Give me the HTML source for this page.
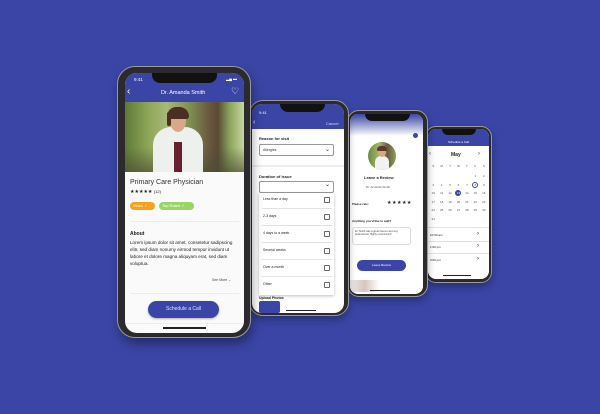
<!DOCTYPE html>
<html><head><meta charset="utf-8"><style>
*{margin:0;padding:0;box-sizing:border-box}
body{width:600px;height:414px;background:#3a45a5;position:relative;overflow:hidden;font-family:"Liberation Sans",sans-serif;color:#222}
.a{position:absolute}
.frame{position:absolute;background:#2b2b2e;border:1.5px solid #9a9a9e;box-shadow:0 4px 8px rgba(0,0,0,.3)}
.scr{position:absolute;background:#fff;overflow:hidden}
.notch{position:absolute;background:#111;border-radius:0 0 8px 8px}
.t{position:absolute;white-space:nowrap}
.hr{position:absolute;height:1px;background:#e2e2e2}
.cb{position:absolute;width:6px;height:6px;border:1px solid #666;border-radius:1px}
.cal{position:absolute;left:1px;width:59px;display:grid;grid-template-columns:repeat(7,1fr);font-size:3px;color:#555;text-align:center;row-gap:0}
.cal span{height:8.6px;line-height:8.6px}
</style></head><body>

<!-- phone 4 -->
<div class="frame" style="left:425px;top:126px;width:67px;height:157px;border-radius:11px"></div>
<div class="scr" style="left:428px;top:129px;width:61px;height:150px;border-radius:8px">
 <div class="a" style="left:0;top:0;width:61px;height:17px;background:#3a45a5"></div>
 <div class="notch" style="left:14px;top:0;width:34px;height:6px"></div>
 <div class="t" style="left:20px;top:11px;font-size:3px;color:#fff">Schedule a Call</div>
 <div class="t" style="left:23px;top:23px;font-size:5px;font-weight:bold">May</div>
 <div class="t" style="left:1px;top:22px;font-size:6px;color:#444">‹</div>
 <div class="t" style="left:50px;top:22px;font-size:6px;color:#444">›</div>
 <div class="cal" style="top:33px"><span>S</span><span>M</span><span>T</span><span>W</span><span>T</span><span>F</span><span>S</span></div>
 <div class="cal" style="top:43px">
  <span></span><span></span><span></span><span></span><span></span><span>1</span><span>2</span>
  <span>3</span><span>4</span><span>5</span><span>6</span><span>7</span><span style="border:.6px solid #3a45a5;border-radius:50%;width:6px;height:6px;line-height:5px;margin:1px auto 0">8</span><span>9</span>
  <span>10</span><span>11</span><span>12</span><span style="background:#3a45a5;color:#fff;border-radius:50%;width:6px;height:6px;line-height:6px;margin:1px auto 0">13</span><span>14</span><span>15</span><span>16</span>
  <span>17</span><span>18</span><span>19</span><span>20</span><span>21</span><span>22</span><span>23</span>
  <span>24</span><span>25</span><span>26</span><span>27</span><span>28</span><span>29</span><span>30</span>
  <span>31</span>
 </div>
 <div class="hr" style="left:0;top:98px;width:61px"></div>
 <div class="t" style="left:2px;top:104px;font-size:3px">10:00 am</div><div class="t" style="left:49px;top:102px;font-size:6px">›</div>
 <div class="hr" style="left:0;top:112px;width:61px"></div>
 <div class="t" style="left:2px;top:116px;font-size:3px">1:00 pm</div><div class="t" style="left:49px;top:114px;font-size:6px">›</div>
 <div class="hr" style="left:0;top:124px;width:61px"></div>
 <div class="t" style="left:2px;top:129px;font-size:3px">3:00 pm</div><div class="t" style="left:49px;top:127px;font-size:6px">›</div>
 <div class="a" style="left:15px;top:146px;width:28px;height:1px;background:#222"></div>
</div>

<!-- phone 3 -->
<div class="frame" style="left:347px;top:110px;width:81px;height:187px;border-radius:12px"></div>
<div class="scr" style="left:350px;top:114px;width:73px;height:180px;border-radius:8px">
 <div class="a" style="left:0;top:0;width:73px;height:22px;background:linear-gradient(#3a45a5,#fff)"></div>
 <div class="notch" style="left:15px;top:0;width:45px;height:7px"></div>
 <div class="a" style="left:63px;top:19px;width:5px;height:5px;border-radius:50%;background:#3a45a5"></div>
 <div class="a" style="left:18px;top:28px;width:28px;height:28px;border-radius:50%;overflow:hidden;background:linear-gradient(90deg,#6d8a44,#a3b86a 40%,#6b5a40 70%,#8aa35a)">
  <div class="a" style="left:7px;top:14px;width:14px;height:16px;border-radius:6px 6px 0 0;background:#f2f2f2"></div>
  <div class="a" style="left:10px;top:5px;width:8px;height:10px;border-radius:50%;background:#d9a88a"></div>
  <div class="a" style="left:9px;top:4px;width:10px;height:5px;border-radius:5px 5px 2px 2px;background:#5a3a28"></div>
 </div>
 <div class="t" style="left:14px;top:61px;font-size:4px;font-weight:bold">Leave a Review</div>
 <div class="t" style="left:16px;top:71px;font-size:3px;color:#555">Dr. Amanda Smith</div>
 <div class="t" style="left:2px;top:88px;font-size:3px;font-weight:bold">Please rate:</div>
 <div class="t" style="left:37px;top:86px;font-size:5px;letter-spacing:.5px">★★★★★</div>
 <div class="t" style="left:2px;top:105px;font-size:3px;font-weight:bold">Anything you'd like to add?</div>
 <div class="a" style="left:2px;top:113px;width:59px;height:18px;border:1px solid #ddd;border-radius:3px;font-size:2.5px;padding:2px;color:#444">Dr. Smith was a great listener and very professional. Highly recommend!</div>
 <div class="a" style="left:7px;top:146px;width:49px;height:11px;border-radius:6px;background:#3a45a5;color:#fff;font-size:3px;text-align:center;line-height:11px">Leave Review</div>
 <div class="a" style="left:0;top:166px;width:73px;height:12px;background:linear-gradient(90deg,#eee,#d7c5c0 20%,#fff 40%)"></div>
 <div class="a" style="left:20px;top:176px;width:30px;height:1px;background:#222"></div>
</div>

<!-- phone 2 -->
<div class="frame" style="left:249px;top:100px;width:100px;height:216px;border-radius:14px"></div>
<div class="scr" style="left:252px;top:104px;width:92px;height:209px;border-radius:10px">
 <div class="a" style="left:0;top:0;width:92px;height:25px;background:#3a45a5"></div>
 <div class="notch" style="left:28px;top:0;width:45px;height:8px"></div>
 <div class="t" style="left:7px;top:6px;font-size:4px;color:#fff">9:41</div>
 <div class="t" style="left:1px;top:15px;font-size:7px;color:#fff">‹</div>
 <div class="t" style="left:74px;top:17px;font-size:4px;color:#dde">Cancel</div>
 <div class="t" style="left:7px;top:32px;font-size:4px;font-weight:bold">Reason for visit</div>
 <div class="a" style="left:7px;top:40px;width:75px;height:12px;border:1px solid #999;border-radius:2px;font-size:3.5px;padding:3px 3px;color:#333">Allergies<span style="position:absolute;right:3px;top:1px;font-size:6px">⌄</span></div>
 <div class="a" style="left:0;top:61px;width:92px;height:2px;background:#eee"></div>
 <div class="t" style="left:7px;top:70px;font-size:4px;font-weight:bold">Duration of issue</div>
 <div class="a" style="left:7px;top:77px;width:75px;height:12px;border:1px solid #999;border-radius:2px"><span style="position:absolute;right:3px;top:-1px;font-size:6px">⌄</span></div>
 <div class="a" style="left:7px;top:89px;width:75px;height:102px;background:#fff;box-shadow:0 1px 3px rgba(0,0,0,.25)"></div>
 <div class="t" style="left:11px;top:93px;font-size:3.5px">Less than a day</div><div class="cb" style="left:72px;top:93px"></div>
 <div class="hr" style="left:10px;top:104px;width:70px"></div>
 <div class="t" style="left:11px;top:110px;font-size:3.5px">2-3 days</div><div class="cb" style="left:72px;top:110px"></div>
 <div class="hr" style="left:10px;top:121px;width:70px"></div>
 <div class="t" style="left:11px;top:127px;font-size:3.5px">4 days to a week</div><div class="cb" style="left:72px;top:127px"></div>
 <div class="hr" style="left:10px;top:138px;width:70px"></div>
 <div class="t" style="left:11px;top:144px;font-size:3.5px">Several weeks</div><div class="cb" style="left:72px;top:144px"></div>
 <div class="hr" style="left:10px;top:155px;width:70px"></div>
 <div class="t" style="left:11px;top:161px;font-size:3.5px">Over a month</div><div class="cb" style="left:72px;top:161px"></div>
 <div class="hr" style="left:10px;top:172px;width:70px"></div>
 <div class="t" style="left:11px;top:178px;font-size:3.5px">Other</div><div class="cb" style="left:72px;top:178px"></div>
 <div class="t" style="left:7px;top:192px;font-size:3.5px;font-weight:bold">Upload Photos</div>
 <div class="a" style="left:7px;top:197px;width:21px;height:12px;background:#3a45a5;border-radius:2px"></div>
 <div class="a" style="left:34px;top:206px;width:30px;height:1px;background:#222"></div>
</div>

<!-- phone 1 -->
<div class="frame" style="left:117px;top:66px;width:134px;height:272px;border-radius:18px;box-shadow:2px 6px 10px rgba(0,0,0,.35)"></div>
<div class="scr" style="left:125px;top:73px;width:119px;height:260px;border-radius:12px;background:#fafafa">
 <div class="a" style="left:0;top:0;width:119px;height:29px;background:#3a45a5"></div>
 <div class="notch" style="left:27px;top:0;width:65px;height:10px"></div>
 <div class="t" style="left:9px;top:4px;font-size:4.5px;color:#fff">9:41</div>
 <div class="t" style="left:101px;top:3px;font-size:4px;color:#fff">▂▄ ▬</div>
 <div class="t" style="left:2px;top:14px;font-size:10px;color:#fff;line-height:10px">‹</div>
 <div class="t" style="left:36px;top:17px;font-size:5.5px;color:#fff">Dr. Amanda Smith</div>
 <div class="t" style="left:106px;top:13px;font-size:9px;color:#fff">♡</div>
 <div class="a" style="left:0;top:29px;width:119px;height:70px;overflow:hidden;background:linear-gradient(90deg,#5e7a38,#8fa758 20%,#a9b878 35%,#7d8f50 55%,#6a5a40 70%,#5a4a35 78%,#8aa55a 88%,#c7d6a0)">
  <div class="a" style="left:0;top:45px;width:119px;height:25px;background:linear-gradient(#5f6b3f00,#4a4a35aa)"></div>
  <div class="a" style="left:28px;top:25px;width:50px;height:50px;border-radius:18px 18px 0 0;background:#eef0ee"></div>
  <div class="a" style="left:49px;top:40px;width:8px;height:30px;background:#6a1f2e"></div>
  <div class="a" style="left:45px;top:8px;width:16px;height:22px;border-radius:50%;background:#d9a88a"></div>
  <div class="a" style="left:42px;top:5px;width:22px;height:12px;border-radius:11px 11px 3px 3px;background:#4a3020"></div>
  <div class="a" style="left:42px;top:10px;width:4px;height:14px;border-radius:2px;background:#4a3020"></div>
 </div>
 <div class="t" style="left:5px;top:106px;font-size:7px;color:#333">Primary Care Physician</div>
 <div class="t" style="left:5px;top:116px;font-size:5px">★★★★★ <span style="font-size:4px">(12)</span></div>
 <div class="a" style="left:5px;top:129px;width:25px;height:8px;border-radius:4px;background:#f7a21e;color:#fff;font-size:4px;line-height:8px;padding-left:3px">Video ✓</div>
 <div class="a" style="left:34px;top:129px;width:35px;height:8px;border-radius:4px;background:#99d564;color:#fff;font-size:4px;line-height:8px;padding-left:3px">Top Rated ✓</div>
 <div class="hr" style="left:5px;top:148px;width:109px;background:#ececec"></div>
 <div class="t" style="left:5px;top:158px;font-size:5px;font-weight:bold">About</div>
 <div class="a" style="left:5px;top:166px;width:112px;font-size:4.6px;line-height:7px;color:#222">Lorem ipsum dolor sit amet, consetetur sadipscing elitr, sed diam nonumy eirmod tempor invidunt ut labore et dolore magna aliquyam erat, sed diam voluptua.</div>
 <div class="t" style="left:87px;top:205px;font-size:3.5px;color:#444">See More ⌄</div>
 <div class="hr" style="left:5px;top:220px;width:109px;background:#ececec"></div>
 <div class="a" style="left:23px;top:228px;width:71px;height:17px;border-radius:9px;background:#3a45a5;color:#dfe2ff;font-size:5px;text-align:center;line-height:17px;box-shadow:0 1px 2px rgba(0,0,0,.3)">Schedule a Call</div>
 <div class="hr" style="left:0;top:250px;width:119px;background:#eee"></div>
 <div class="a" style="left:38px;top:254px;width:43px;height:1.5px;background:#222"></div>
</div>
</body></html>
